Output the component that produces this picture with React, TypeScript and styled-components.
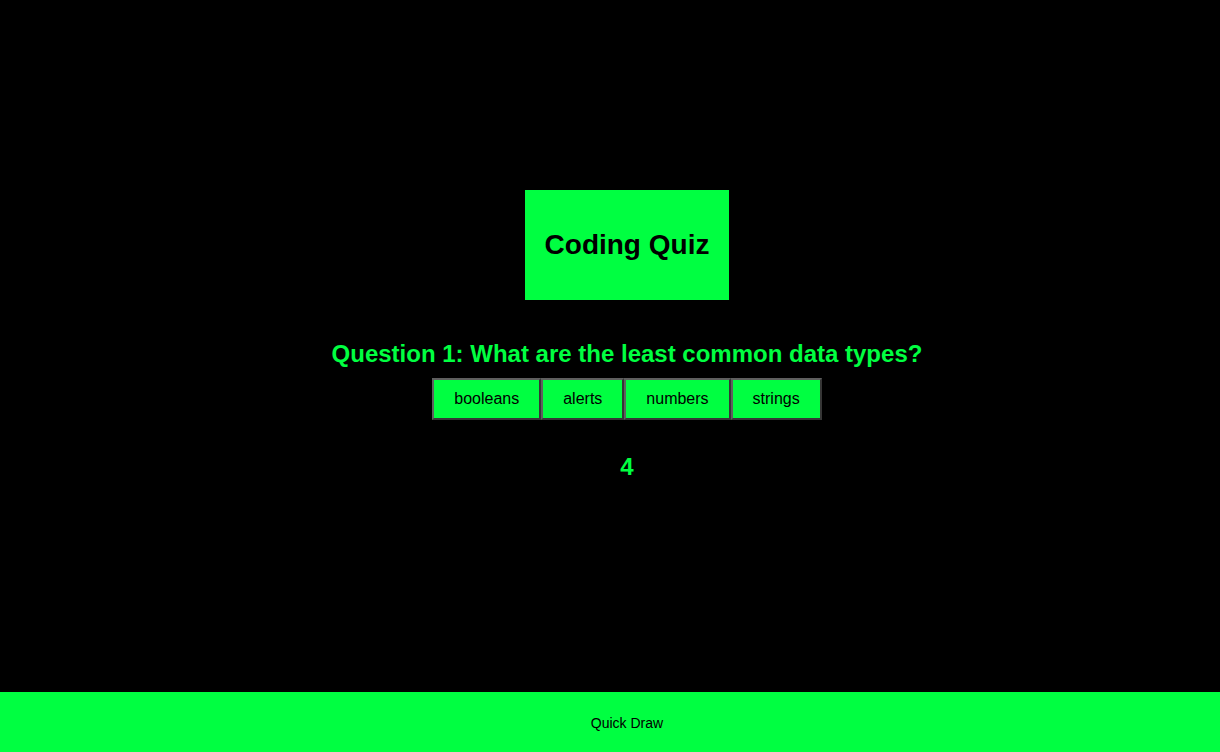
import React from "react";
import styled, { createGlobalStyle } from "styled-components";

const GREEN = "#00ff41";

const GlobalStyle = createGlobalStyle`
  html, body {
    margin: 0;
    padding: 0;
    background: #000;
    font-family: "Liberation Sans", Arial, sans-serif;
  }
`;

const Page = styled.div`
  display: flex;
  flex-direction: column;
  min-height: 752px;
`;

const Main = styled.main`
  flex: 1;
  display: flex;
  flex-direction: column;
  align-items: center;
  padding: 190px 0 0 34px;
  box-sizing: border-box;
  height: 692px;
`;

const TitleBox = styled.header`
  background: ${GREEN};
  padding: 0 20px;
  height: 110px;
  box-sizing: border-box;
  display: flex;
  align-items: center;
`;

const Title = styled.h1`
  margin: 0;
  font-size: 28px;
  font-weight: bold;
  color: #000;
  line-height: normal;
`;

const Question = styled.h2`
  margin: 40px 0 0;
  font-size: 24px;
  font-weight: bold;
  color: ${GREEN};
  line-height: normal;
`;

const Choices = styled.div`
  display: flex;
  margin-top: 10px;
`;

const Choice = styled.button`
  font-family: "Liberation Sans", Arial, sans-serif;
  font-size: 16px;
  line-height: 18px;
  color: #000;
  background: ${GREEN};
  padding: 10px 20px;
  border-width: 2px;
  border-style: solid;
  border-color: #5f5f5f #363636 #363636 #5f5f5f;
  cursor: pointer;
`;

const Score = styled.h2`
  margin: 33px 0 0;
  font-size: 24px;
  font-weight: bold;
  color: ${GREEN};
  line-height: normal;
`;

const Footer = styled.footer`
  height: 60px;
  box-sizing: border-box;
  background: ${GREEN};
  display: flex;
  align-items: center;
  justify-content: center;
  padding: 2px 0 0 34px;
  font-size: 14px;
  color: #000;
`;

const choices = ["booleans", "alerts", "numbers", "strings"];

export default function App() {
  return (
    <Page>
      <GlobalStyle />
      <Main>
        <TitleBox>
          <Title>Coding Quiz</Title>
        </TitleBox>
        <Question>Question 1: What are the least common data types?</Question>
        <Choices>
          {choices.map((c) => (
            <Choice key={c}>{c}</Choice>
          ))}
        </Choices>
        <Score>4</Score>
      </Main>
      <Footer>Quick Draw</Footer>
    </Page>
  );
}
